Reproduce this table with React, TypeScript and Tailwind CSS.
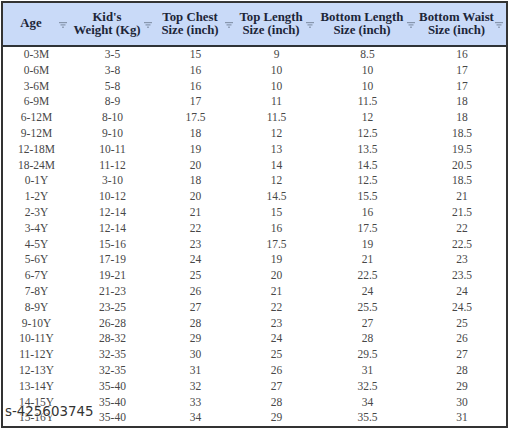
import React from 'react';

const columns = [
  { lines: ['Age'], width: 'w-[67px]' },
  { lines: ["Kid's", 'Weight (Kg)'], width: 'w-[85px]' },
  { lines: ['Top Chest', 'Size (inch)'], width: 'w-[81px]' },
  { lines: ['Top Length', 'Size (inch)'], width: 'w-[81px]' },
  { lines: ['Bottom Length', 'Size (inch)'], width: 'w-[101px]' },
  { lines: ['Bottom Waist', 'Size (inch)'], width: 'w-[88px]' },
];

const rows: string[][] = [
  ['0-3M', '3-5', '15', '9', '8.5', '16'],
  ['0-6M', '3-8', '16', '10', '10', '17'],
  ['3-6M', '5-8', '16', '10', '10', '17'],
  ['6-9M', '8-9', '17', '11', '11.5', '18'],
  ['6-12M', '8-10', '17.5', '11.5', '12', '18'],
  ['9-12M', '9-10', '18', '12', '12.5', '18.5'],
  ['12-18M', '10-11', '19', '13', '13.5', '19.5'],
  ['18-24M', '11-12', '20', '14', '14.5', '20.5'],
  ['0-1Y', '3-10', '18', '12', '12.5', '18.5'],
  ['1-2Y', '10-12', '20', '14.5', '15.5', '21'],
  ['2-3Y', '12-14', '21', '15', '16', '21.5'],
  ['3-4Y', '12-14', '22', '16', '17.5', '22'],
  ['4-5Y', '15-16', '23', '17.5', '19', '22.5'],
  ['5-6Y', '17-19', '24', '19', '21', '23'],
  ['6-7Y', '19-21', '25', '20', '22.5', '23.5'],
  ['7-8Y', '21-23', '26', '21', '24', '24'],
  ['8-9Y', '23-25', '27', '22', '25.5', '24.5'],
  ['9-10Y', '26-28', '28', '23', '27', '25'],
  ['10-11Y', '28-32', '29', '24', '28', '26'],
  ['11-12Y', '32-35', '30', '25', '29.5', '27'],
  ['12-13Y', '32-35', '31', '26', '31', '28'],
  ['13-14Y', '35-40', '32', '27', '32.5', '29'],
  ['14-15Y', '35-40', '33', '28', '34', '30'],
  ['15-16Y', '35-40', '34', '29', '35.5', '31'],
];

// little sheets-style filter glyph
const FilterIcon = () => (
  <svg width="8" height="6" viewBox="0 0 8 6" className="shrink-0 mt-[2px]">
    <rect x="0" y="0" width="8" height="1.2" fill="#8796ad" />
    <rect x="1.5" y="2.3" width="5" height="1.2" fill="#8796ad" />
    <rect x="3" y="4.6" width="2" height="1.2" fill="#8796ad" />
  </svg>
);

export default function App() {
  return (
    <div className="w-[512px] h-[429px] bg-white pt-px pl-px">
      <div className="relative w-[507px] h-[427px] border-2 border-[#333333] flex flex-col">
        {/* Header */}
        <div className="flex h-[44px] bg-[#c9daf8] border-b-2 border-[#2f3337] font-['Liberation_Serif',serif] font-bold text-[12.8px] leading-[13px] text-[#1d2638]">
          {columns.map((col) => (
            <div key={col.lines[0]} className={`${col.width} flex items-center pr-[3px]`}>
              <div className="flex-1 flex flex-col items-center text-center">
                {col.lines.map((l) => (
                  <span key={l} className="whitespace-nowrap">{l}</span>
                ))}
              </div>
              <FilterIcon />
            </div>
          ))}
        </div>

        {/* Body */}
        <div className="flex flex-col font-['Liberation_Serif',serif] text-[11.5px] text-[#474747]">
          {rows.map((row) => (
            <div key={row[0]} className="flex h-[15.8px] items-center">
              {row.map((cell, i) => (
                <div key={i} className={`${columns[i].width} text-center leading-none`}>
                  {cell}
                </div>
              ))}
            </div>
          ))}
        </div>

        {/* watermark */}
        <div className="absolute left-[2px] top-[402px] font-['DejaVu_Sans',sans-serif] text-[13.4px] leading-none text-[#333333] [text-shadow:0_0_2px_#fff,0_0_2px_#fff,0_0_1px_#fff]">
          s-425603745
        </div>
      </div>
    </div>
  );
}
